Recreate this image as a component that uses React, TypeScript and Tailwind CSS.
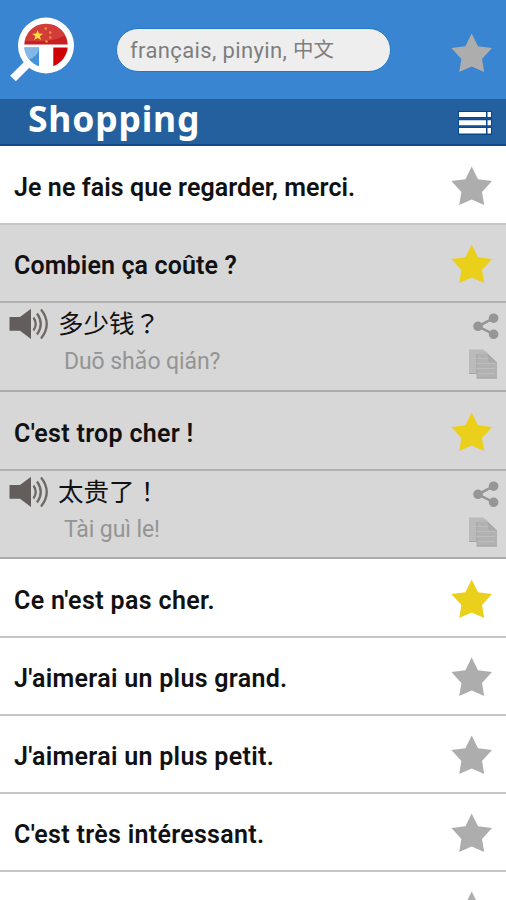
import React from 'react'

type Phrase = {
  fr: string
  tracking: string
  favorite?: boolean
  zh?: string
  mark?: string
  pinyin?: string
  rowHeight: string
  panelHeight?: string
}

const phrases: Phrase[] = [
  { fr: 'Je ne fais que regarder, merci.', tracking: 'tracking-[0.08px]', rowHeight: 'h-[79px] pt-px' },
  { fr: 'Combien ça coûte ?', tracking: 'tracking-[0.13px]', favorite: true, zh: '多少钱', mark: '？', pinyin: 'Duō shǎo qián?', rowHeight: 'h-[78px]', panelHeight: 'h-[89px]' },
  { fr: "C'est trop cher !", tracking: 'tracking-[0.3px]', favorite: true, zh: '太贵了', mark: '！', pinyin: 'Tài guì le!', rowHeight: 'h-[79px] pt-px', panelHeight: 'h-[88px]' },
  { fr: "Ce n'est pas cher.", tracking: 'tracking-[0.37px]', favorite: true, rowHeight: 'h-[79px] pt-px' },
  { fr: "J'aimerai un plus grand.", tracking: 'tracking-[0.3px]', rowHeight: 'h-[78px]' },
  { fr: "J'aimerai un plus petit.", tracking: 'tracking-[0.3px]', rowHeight: 'h-[78px]' },
  { fr: "C'est très intéressant.", tracking: 'tracking-[0.3px]', rowHeight: 'h-[78px]' },
]

function Star({ active = false }: { active?: boolean }) {
  return (
    <svg width="42" height="40" viewBox="0 0 42 40" className={active ? 'shrink-0 text-[#ead01b]' : 'shrink-0 text-[#adadad]'}>
      <path d="M20.7 0.5 L27 13.2 L41 15.1 L31 26 L33.2 39 L20.7 33.6 L8.2 39 L10.4 26 L0.4 15.1 L14.4 13.2 Z" fill="currentColor" />
    </svg>
  )
}

function Logo() {
  return (
    <svg width="68" height="70" viewBox="0 0 68 70" className="shrink-0">
      <defs>
        <clipPath id="lens">
          <circle cx="38" cy="31.5" r="21.8" />
        </clipPath>
      </defs>
      <path d="M22 47.5 L5 64.5" stroke="#fff" strokeWidth="8" />
      <circle cx="38" cy="31.5" r="28" fill="#fff" />
      <g clipPath="url(#lens)">
        <rect x="16" y="8" width="46" height="22.5" fill="#c91f22" />
        <path d="M16 8 h46 v10 q-12 11 -46 9 z" fill="#dc5a50" opacity="0.5" />
        <rect x="16" y="33.5" width="15" height="22" fill="#4391d8" />
        <path d="M16 33.5 h15 q0 9 -12 13 z" fill="#84b6e6" />
        <rect x="45.3" y="33.5" width="17" height="22" fill="#d00008" />
      </g>
      <path d="M29.5 16 l1.5 3.6 4 .2 -3.1 2.4 1.1 3.8 -3.4 -2.1 -3.4 2.1 1.1 -3.8 -3.1 -2.4 4 -.2z" fill="#ffdf3a" />
      <g fill="#f09a38">
        <circle cx="37.7" cy="14.5" r="1.2" />
        <circle cx="42.3" cy="18.5" r="1.2" />
        <circle cx="42.3" cy="23.5" r="1.2" />
        <circle cx="38.5" cy="27.5" r="1.2" />
      </g>
    </svg>
  )
}

function MenuIcon() {
  return (
    <svg width="34" height="26" viewBox="0 0 34 26" className="mt-[2px] shrink-0">
      <rect x="0" y="1" width="34" height="24" fill="#08468a" />
      <g fill="#fff">
        <path d="M1 2h27v5H1z M1 10.3h27v5H1z M1 18h27v5.5H1z" />
        <path d="M29.5 2h3.5v5h-3.5z M29.5 10.3h3.5v5h-3.5z M29.5 18h3.5v5.5h-3.5z" />
      </g>
      <path d="M0 8.2h34v1H0z M0 16.2h34v1H0z" fill="#1d5a9b" />
    </svg>
  )
}

function Speaker() {
  return (
    <svg width="40" height="32" viewBox="0 0 40 32" className="shrink-0">
      <path d="M0.5 9 H11 L22 0.8 V31 L11 22.8 H0.5 Z" fill="#635d5b" />
      <g fill="none" stroke="#6e6967" strokeWidth="2.3">
        <path d="M24.5 9.5 Q29 16 24.5 22.5" />
        <path d="M28 5.5 Q35.5 16 28 26.5" />
        <path d="M32 1.5 Q43.5 16 32 30.5" />
      </g>
    </svg>
  )
}

function Share() {
  return (
    <svg width="26" height="27" viewBox="0 0 26 27">
      <path d="M20.8 5.2 L5 13.3 L20.8 21.3" fill="none" stroke="#969696" strokeWidth="2.6" />
      <g fill="#969696">
        <circle cx="20.6" cy="5.2" r="4.8" />
        <circle cx="5" cy="13.3" r="4.8" />
        <circle cx="20.6" cy="21.3" r="4.8" />
      </g>
    </svg>
  )
}

function Copy() {
  return (
    <svg width="28" height="30" viewBox="0 0 28 30" className="mr-[2px]">
      <path d="M0 0.5 H14 L19 4 V25 H0 Z" fill="#bababa" />
      <path d="M7.5 4.5 H18.5 L28 13.5 V29.5 H7.5 Z" fill="#b2b2b2" />
      <path d="M18.5 4.5 L28 13.5 H20 Z" fill="#a9a9a9" />
      <path d="M7.8 5 V25 M0 24.5h7.5 M7.5 29h20.5" stroke="#a6a6a6" />
      <path d="M2 9.5h17 M2 14.5h24 M2 19.5h24 M9 24.5h17" stroke="#bdbdbd" />
    </svg>
  )
}

export default function App() {
  return (
    <div className="h-[900px] w-[506px] overflow-hidden bg-white font-['Roboto','Noto_Sans_CJK_SC',sans-serif]">
      <header className="flex h-[99px] items-start bg-[#3a85d1] pl-2">
        <div className="pt-[14px]">
          <Logo />
        </div>
        <div className="mt-[28px] ml-[40px] flex h-[44px] w-[275px] items-center rounded-full border border-[#2277c8] bg-[#eeeeee] pl-[13px] text-[22px] whitespace-pre text-[#7e7e7e]">
          <span className="tracking-[0.37px]">français, pinyin, </span>
          <span className="text-[20.5px]">中文</span>
        </div>
        <div className="mt-[33px] ml-[60px]">
          <Star />
        </div>
      </header>

      <div className="flex h-[47px] items-center justify-between border-b-2 border-[#11498a] bg-[#24609d] pr-[14px] pl-[28px]">
        <h1 className="-mt-[5px] font-['Noto_Sans',sans-serif] text-[35.5px] leading-none font-bold tracking-[0.8px] text-white">Shopping</h1>
        <MenuIcon />
      </div>

      <main>
        {phrases.map((p) => (
          <section key={p.fr} className={p.zh ? 'bg-[#d7d7d7]' : 'bg-white'}>
            <div className={`flex items-center justify-between border-b-2 pr-[13px] pl-[14px] ${p.rowHeight} ${p.zh ? 'border-[#b0b0b0]' : 'border-[#c6c6c6]'}`}>
              <span className={`pt-[5px] text-[25px] font-semibold whitespace-nowrap text-[#111] ${p.tracking}`}>{p.fr}</span>
              <div className="pt-[2px]">
                <Star active={p.favorite} />
              </div>
            </div>
            {p.zh && (
              <div className={`flex justify-between border-b-2 border-[#acacac] pr-[7px] pl-[9px] ${p.panelHeight}`}>
                <div className="flex">
                  <div className="pt-[5px]">
                    <Speaker />
                  </div>
                  <div className="pl-[9px] whitespace-nowrap">
                    <p className="pt-[5px] text-[25.5px] leading-[28px] text-[#111]">
                      {p.zh}
                      <span className="font-['Noto_Sans_CJK_TC',sans-serif]">{p.mark}</span>
                    </p>
                    <p className="pt-[10px] pl-[6px] text-[23px] leading-[28px] tracking-[-0.1px] text-[#949494]">{p.pinyin}</p>
                  </div>
                </div>
                <div className="flex flex-col items-end gap-[9px] pt-[10px]">
                  <Share />
                  <Copy />
                </div>
              </div>
            )}
          </section>
        ))}
        <div className="flex justify-end pt-[19px] pr-[13px]">
          <Star />
        </div>
      </main>
    </div>
  )
}
